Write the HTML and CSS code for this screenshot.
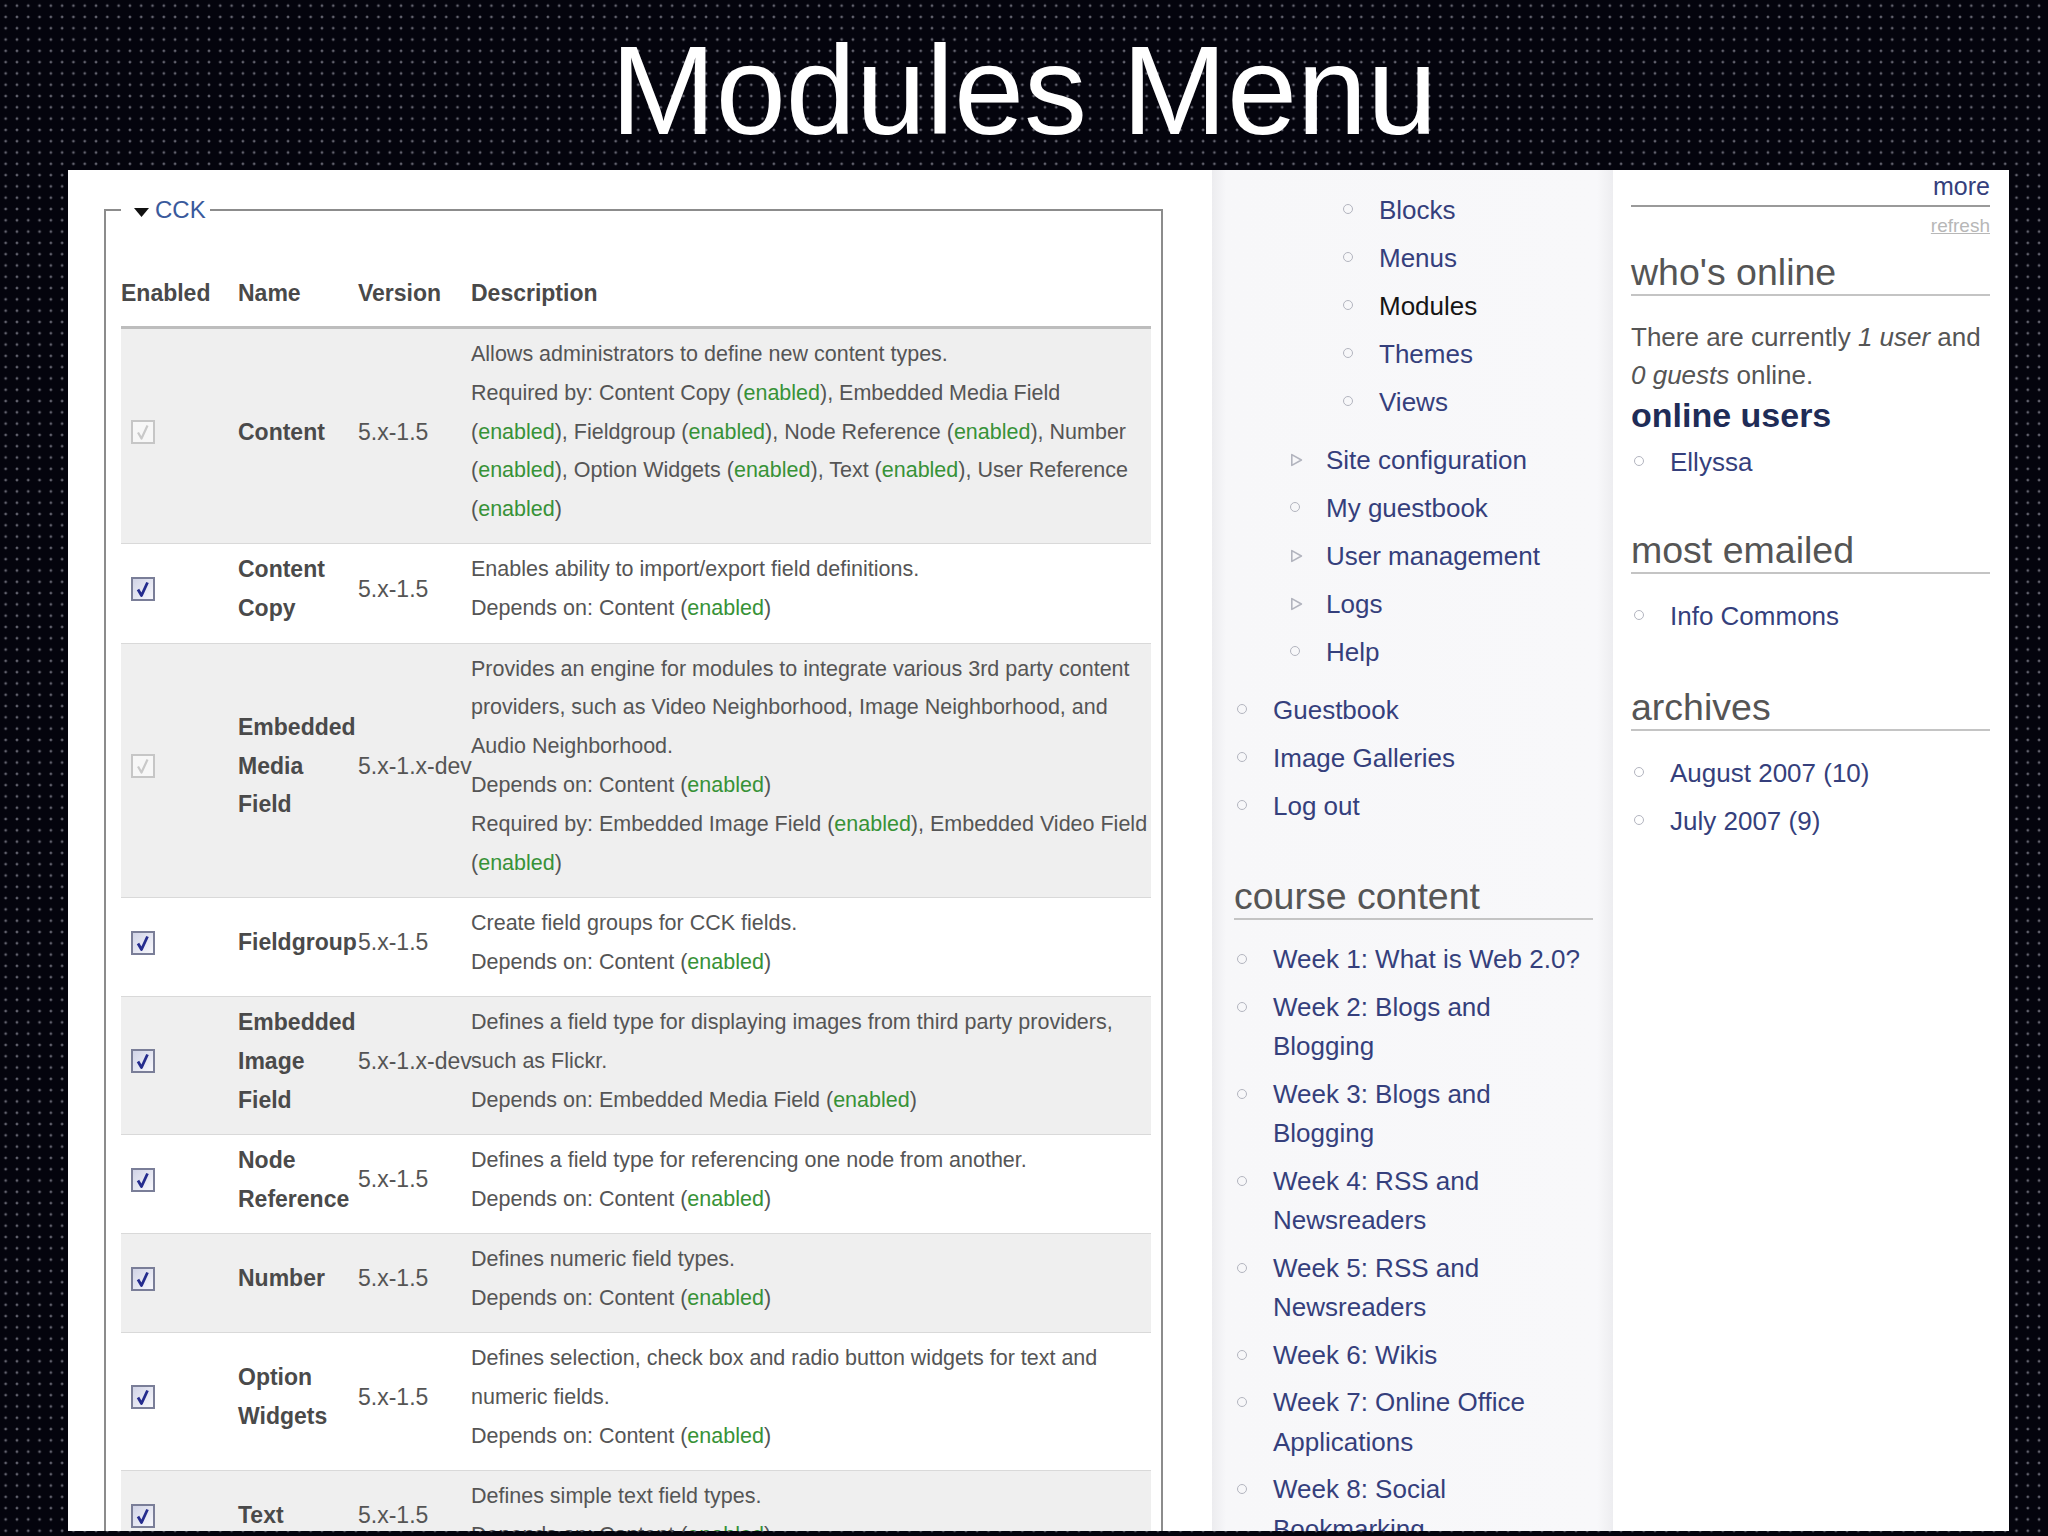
FILE: index.html
```html
<!DOCTYPE html>
<html lang="en">
<head>
<meta charset="utf-8">
<title>Modules Menu</title>
<link rel="stylesheet" href="styles.css">
</head>
<body>
<svg class="defs" width="0" height="0" aria-hidden="true">
  <defs>
    <linearGradient id="cbg" x1="0" y1="0" x2="1" y2="1">
      <stop offset="0" stop-color="#cfd2e6"/>
      <stop offset="1" stop-color="#f9f9fd"/>
    </linearGradient>
    <symbol id="cbon" viewBox="0 0 24 24">
      <rect x="1" y="1" width="22" height="22" fill="url(#cbg)" stroke="#7a7e98" stroke-width="2"/>
      <path d="M7 12.5 L10.5 18.5 L16.5 5.5" fill="none" stroke="#252c8e" stroke-width="2.8" stroke-linejoin="round"/>
    </symbol>
    <symbol id="cboff" viewBox="0 0 24 24">
      <rect x="1" y="1" width="22" height="22" fill="#f7f7f7" stroke="#c6c6c6" stroke-width="2"/>
      <path d="M7 12.5 L10.5 18.5 L16.5 5.5" fill="none" stroke="#c9c9c9" stroke-width="2.2" stroke-linejoin="round"/>
    </symbol>
    <symbol id="tri" viewBox="0 0 13 14">
      <path d="M1.8 1.6 L11.4 7 L1.8 12.4 Z" fill="none" stroke="#b2b4be" stroke-width="1.6" stroke-linejoin="round"/>
    </symbol>
  </defs>
</svg>

<h1 class="title">Modules Menu</h1>

<div class="panel">
  <main class="main">
    <fieldset class="cck">
      <legend><svg class="twisty" width="15" height="9" viewBox="0 0 15 9"><path d="M0 0H15L7.5 9Z" fill="#111"/></svg>CCK</legend>
      <table class="mods">
        <colgroup>
          <col class="c-en"><col class="c-name"><col class="c-ver"><col class="c-desc">
        </colgroup>
        <thead>
          <tr><th>Enabled</th><th>Name</th><th>Version</th><th>Description</th></tr>
        </thead>
        <tbody>
          <tr class="odd">
            <td class="cb"><svg class="box"><use href="#cboff"/></svg></td>
            <td class="name">Content</td>
            <td class="ver">5.x-1.5</td>
            <td class="desc"><div>Allows administrators to define new content types.</div><div>Required by: Content Copy (<span class="ok">enabled</span>), Embedded Media Field (<span class="ok">enabled</span>), Fieldgroup (<span class="ok">enabled</span>), Node Reference (<span class="ok">enabled</span>), Number (<span class="ok">enabled</span>), Option Widgets (<span class="ok">enabled</span>), Text (<span class="ok">enabled</span>), User Reference (<span class="ok">enabled</span>)</div></td>
          </tr>
          <tr class="even">
            <td class="cb"><svg class="box"><use href="#cbon"/></svg></td>
            <td class="name">Content Copy</td>
            <td class="ver">5.x-1.5</td>
            <td class="desc"><div>Enables ability to import/export field definitions.</div><div>Depends on: Content (<span class="ok">enabled</span>)</div></td>
          </tr>
          <tr class="odd">
            <td class="cb"><svg class="box"><use href="#cboff"/></svg></td>
            <td class="name">Embedded Media Field</td>
            <td class="ver">5.x-1.x-dev</td>
            <td class="desc"><div>Provides an engine for modules to integrate various 3rd party content providers, such as Video Neighborhood, Image Neighborhood, and Audio Neighborhood.</div><div>Depends on: Content (<span class="ok">enabled</span>)</div><div>Required by: Embedded Image Field (<span class="ok">enabled</span>), Embedded Video Field (<span class="ok">enabled</span>)</div></td>
          </tr>
          <tr class="even">
            <td class="cb"><svg class="box"><use href="#cbon"/></svg></td>
            <td class="name">Fieldgroup</td>
            <td class="ver">5.x-1.5</td>
            <td class="desc"><div>Create field groups for CCK fields.</div><div>Depends on: Content (<span class="ok">enabled</span>)</div></td>
          </tr>
          <tr class="odd">
            <td class="cb"><svg class="box"><use href="#cbon"/></svg></td>
            <td class="name">Embedded Image Field</td>
            <td class="ver">5.x-1.x-dev</td>
            <td class="desc"><div>Defines a field type for displaying images from third party providers, such as Flickr.</div><div>Depends on: Embedded Media Field (<span class="ok">enabled</span>)</div></td>
          </tr>
          <tr class="even">
            <td class="cb"><svg class="box"><use href="#cbon"/></svg></td>
            <td class="name">Node Reference</td>
            <td class="ver">5.x-1.5</td>
            <td class="desc"><div>Defines a field type for referencing one node from another.</div><div>Depends on: Content (<span class="ok">enabled</span>)</div></td>
          </tr>
          <tr class="odd">
            <td class="cb"><svg class="box"><use href="#cbon"/></svg></td>
            <td class="name">Number</td>
            <td class="ver">5.x-1.5</td>
            <td class="desc"><div>Defines numeric field types.</div><div>Depends on: Content (<span class="ok">enabled</span>)</div></td>
          </tr>
          <tr class="even">
            <td class="cb"><svg class="box"><use href="#cbon"/></svg></td>
            <td class="name">Option Widgets</td>
            <td class="ver">5.x-1.5</td>
            <td class="desc"><div>Defines selection, check box and radio button widgets for text and numeric fields.</div><div>Depends on: Content (<span class="ok">enabled</span>)</div></td>
          </tr>
          <tr class="odd">
            <td class="cb"><svg class="box"><use href="#cbon"/></svg></td>
            <td class="name">Text</td>
            <td class="ver">5.x-1.5</td>
            <td class="desc"><div>Defines simple text field types.</div><div>Depends on: Content (<span class="ok">enabled</span>)</div></td>
          </tr>
          <tr class="even">
            <td class="cb"><svg class="box"><use href="#cbon"/></svg></td>
            <td class="name">User Reference</td>
            <td class="ver">5.x-1.5</td>
            <td class="desc"><div>Defines a field type for referencing a user from a node.</div><div>Depends on: Content (<span class="ok">enabled</span>)</div></td>
          </tr>
        </tbody>
      </table>
    </fieldset>
  </main>

  <aside class="nav">
    <ul class="menu">
      <li><a class="lnk exp">Administer</a>
        <ul>
          <li><a class="lnk col"><svg class="tri"><use href="#tri"/></svg>Content management</a></li>
          <li><a class="lnk exp">Site building</a>
            <ul class="sub3">
              <li><a class="lnk leaf">Blocks</a></li>
              <li><a class="lnk leaf">Menus</a></li>
              <li><a class="lnk leaf active">Modules</a></li>
              <li><a class="lnk leaf">Themes</a></li>
              <li><a class="lnk leaf">Views</a></li>
            </ul>
          </li>
          <li><a class="lnk col"><svg class="tri"><use href="#tri"/></svg>Site configuration</a></li>
          <li><a class="lnk leaf">My guestbook</a></li>
          <li><a class="lnk col"><svg class="tri"><use href="#tri"/></svg>User management</a></li>
          <li><a class="lnk col"><svg class="tri"><use href="#tri"/></svg>Logs</a></li>
          <li><a class="lnk leaf">Help</a></li>
        </ul>
      </li>
      <li><a class="lnk leaf">Guestbook</a></li>
      <li><a class="lnk leaf">Image Galleries</a></li>
      <li><a class="lnk leaf">Log out</a></li>
    </ul>

    <h2 class="bt course">course content</h2>
    <ul class="clist">
      <li><a class="lnk leaf">Week 1: What is Web 2.0?</a></li>
      <li><a class="lnk leaf">Week 2: Blogs and Blogging</a></li>
      <li><a class="lnk leaf">Week 3: Blogs and Blogging</a></li>
      <li><a class="lnk leaf">Week 4: RSS and Newsreaders</a></li>
      <li><a class="lnk leaf">Week 5: RSS and Newsreaders</a></li>
      <li><a class="lnk leaf">Week 6: Wikis</a></li>
      <li><a class="lnk leaf">Week 7: Online Office Applications</a></li>
      <li><a class="lnk leaf">Week 8: Social Bookmarking</a></li>
    </ul>
  </aside>

  <aside class="side">
    <div class="more"><a>more</a></div>
    <div class="refresh"><a>refresh</a></div>

    <h2 class="bt who">who's online</h2>
    <p class="online">There are currently <em>1 user</em> and <em>0 guests</em> online.</p>
    <h3 class="ou">online users</h3>
    <ul class="blist first">
      <li><a class="lnk leaf">Ellyssa</a></li>
    </ul>

    <h2 class="bt emailed">most emailed</h2>
    <ul class="blist after">
      <li><a class="lnk leaf">Info Commons</a></li>
    </ul>

    <h2 class="bt arch">archives</h2>
    <ul class="blist after">
      <li><a class="lnk leaf">August 2007 (10)</a></li>
      <li><a class="lnk leaf">July 2007 (9)</a></li>
    </ul>
  </aside>
</div>
</body>
</html>
```

FILE: styles.css
```css
html, body {
  margin: 0;
  padding: 0;
}

body {
  width: 2048px;
  height: 1536px;
  overflow: hidden;
  background-color: #04040d;
  background-image: radial-gradient(circle at center, #63636f 0, #63636f 1px, rgba(0, 0, 0, 0) 1.7px);
  background-size: 11.3px 11.3px;
  font-family: "Liberation Sans", Arial, sans-serif;
  color: #4d4d4d;
}

.defs {
  position: absolute;
  width: 0;
  height: 0;
  overflow: hidden;
}

.title {
  margin: 0;
  height: 170px;
  box-sizing: border-box;
  padding-top: 12px;
  font-size: 126px;
  line-height: 158px;
  font-weight: normal;
  color: #ffffff;
  text-align: center;
  white-space: nowrap;
}

.panel {
  display: flex;
  width: 1941px;
  height: 1361px;
  margin-left: 68px;
  background: #ffffff;
  overflow: hidden;
}

/* ---------- main column ---------- */
.main {
  flex: none;
  width: 1144px;
  box-sizing: border-box;
  padding-top: 26px;
}

.cck {
  margin: 0 0 0 36px;
  width: 1059px;
  box-sizing: border-box;
  border: 2px solid #8c8c8c;
  padding: 49px 10px 0 15px;
  min-inline-size: 0;
}

.cck legend {
  padding: 0 4px 0 13px;
  font-size: 24px;
  line-height: 28px;
  color: #3a5a9c;
}

.twisty {
  display: inline-block;
  vertical-align: baseline;
  margin-right: 6px;
  position: relative;
  top: -1px;
}

.mods {
  border-collapse: collapse;
  table-layout: fixed;
  width: 1030px;
}

.c-en { width: 117px; }
.c-name { width: 120px; }
.c-ver { width: 113px; }
.c-desc { width: 680px; }

.mods th {
  text-align: left;
  font-size: 23px;
  font-weight: bold;
  line-height: 39px;
  color: #494949;
  padding: 1px 0 13px;
  border-bottom: 3px solid #bdbdbd;
  white-space: nowrap;
}

.mods td {
  padding: 6px 0 14.5px;
  line-height: 38.8px;
  vertical-align: middle;
}

.mods tbody tr {
  border-bottom: 1px solid #d9d9d9;
}

.mods tr.odd {
  background: #efefef;
}

.mods tr.even {
  background: #ffffff;
}

.mods td.cb {
  padding-left: 10px;
}

.box {
  display: block;
  width: 24px;
  height: 24px;
}

.mods td.name {
  font-size: 23px;
  font-weight: bold;
  color: #4a4a4a;
}

.mods td.ver {
  font-size: 23px;
  color: #555555;
  white-space: nowrap;
}

.mods td.desc {
  font-size: 21.5px;
  color: #555555;
}

.ok {
  color: #379237;
}

/* ---------- middle navigation column ---------- */
.nav {
  flex: none;
  width: 401px;
  box-sizing: border-box;
  padding: 0 20px 0 22px;
  background: linear-gradient(90deg, #ececef 0, #f7f7f9 14px, #f8f8fa calc(100% - 16px), #ededf0 100%);
}

.nav ul,
.side ul {
  list-style: none;
  margin: 0;
}

.menu {
  margin-top: -134px !important;
  padding-left: 39px;
}

.menu ul {
  padding-left: 53px;
  margin-bottom: 10px !important;
}

.menu ul.sub3 {
  margin-top: 6px !important;
}

.lnk {
  display: block;
  position: relative;
  padding: 4px 0;
  font-size: 26px;
  line-height: 40px;
  color: #353f7c;
  text-decoration: none;
}

.lnk.active {
  color: #151515;
}

.lnk.leaf::before {
  content: "";
  position: absolute;
  left: -36px;
  top: 18px;
  width: 8px;
  height: 8px;
  border: 1.6px solid #b3b5bf;
  border-radius: 50%;
}

.tri {
  position: absolute;
  left: -36px;
  top: 17px;
  width: 13px;
  height: 14px;
}

.bt {
  margin: 0;
  font-size: 37.5px;
  line-height: 44px;
  font-weight: normal;
  color: #555555;
  border-bottom: 2px solid #c4c4c4;
  white-space: nowrap;
}

.course {
  margin-top: 44px;
}

.clist {
  margin-top: 16px !important;
  padding-left: 39px;
}

.clist .lnk {
  line-height: 39.5px;
}

/* ---------- right column ---------- */
.side {
  flex: none;
  width: 396px;
  box-sizing: border-box;
  padding: 0 19px 0 18px;
  background: #ffffff;
}

.more {
  text-align: right;
  font-size: 25px;
  line-height: 32px;
  padding-bottom: 3px;
  border-bottom: 2px solid #9a9a9a;
  color: #353f7c;
}

.refresh {
  margin-top: 7px;
  text-align: right;
  font-size: 19px;
  line-height: 24px;
}

.refresh a {
  color: #b7b7b7;
  text-decoration: underline;
}

.who {
  margin-top: 12px;
}

.online {
  margin: 22px 0 0;
  font-size: 26px;
  line-height: 38px;
  color: #555555;
}

.online em {
  font-style: italic;
}

.ou {
  margin: 1px 0 0;
  font-size: 34px;
  line-height: 40px;
  font-weight: bold;
  color: #1f2c57;
}

.blist {
  padding-left: 39px;
}

.blist.first {
  margin-top: 3px !important;
}

.emailed {
  margin-top: 42px;
}

.blist.after {
  margin-top: 18px !important;
}

.arch {
  margin-top: 45px;
}
```
